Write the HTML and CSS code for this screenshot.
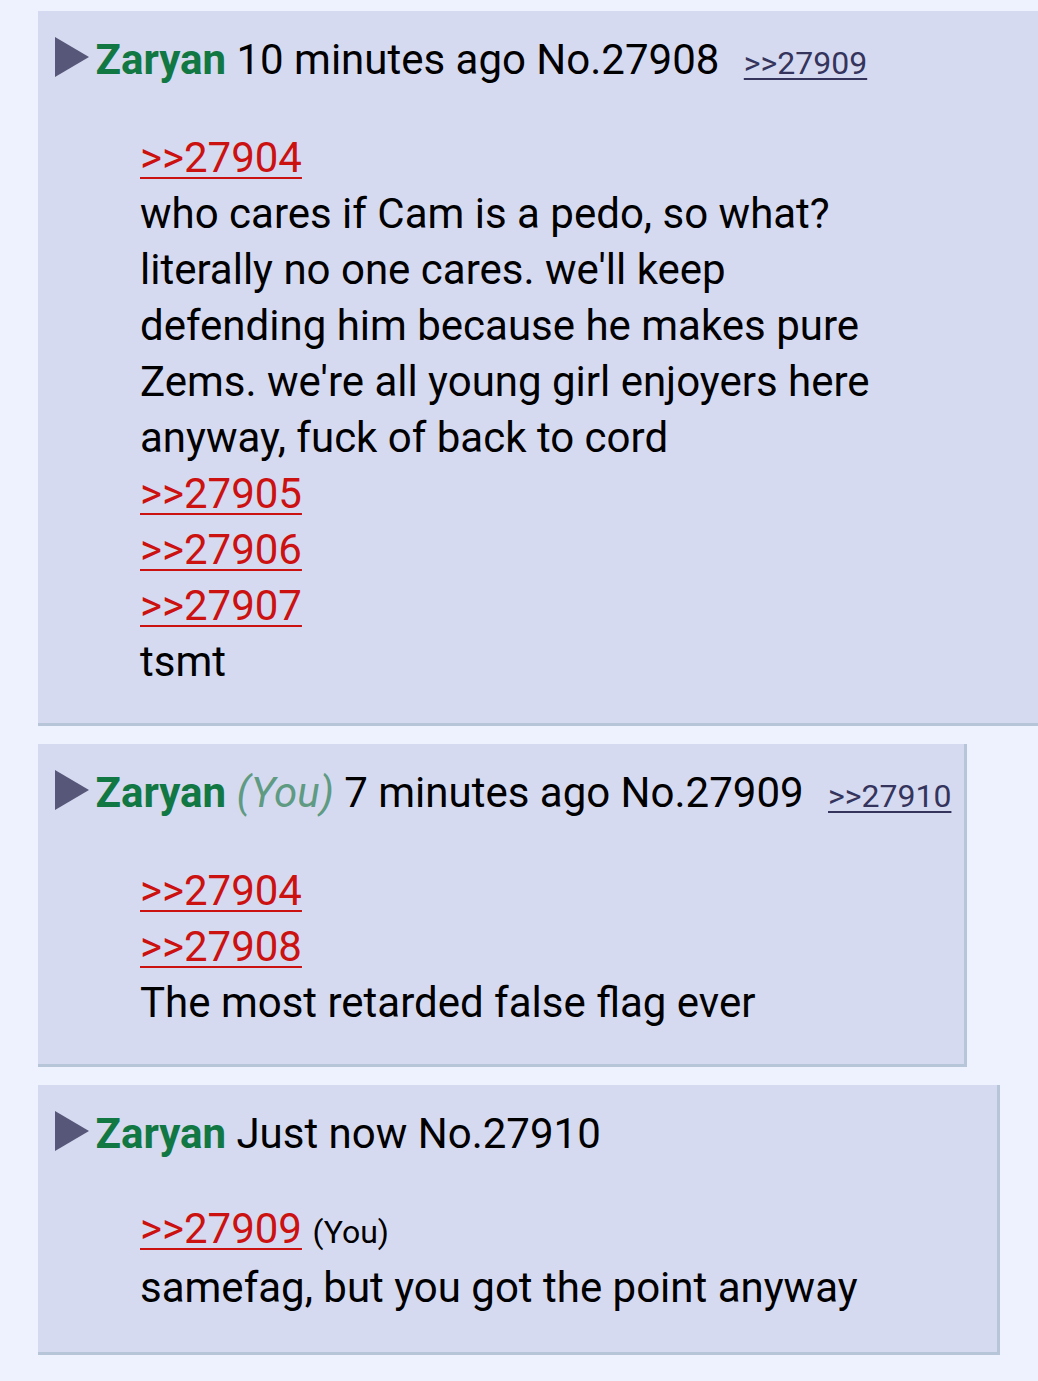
FILE: index.html
```html
<!DOCTYPE html>
<html lang="en">
<head>
  <meta charset="UTF-8">
  <meta name="viewport" content="width=device-width, initial-scale=1.0">
  <title>Thread</title>
  <link rel="stylesheet" href="styles.css">
</head>
<body>

  <div class="hilo">
    <!-- Post 27908 -->
    <div class="post">
      <div class="cabecera">
        <span class="flecha"></span>
        <span class="nombre">Zaryan</span>
        <span class="fecha">10 minutes ago</span>
        <span class="numero">No.27908</span>
        <a class="respuesta" href="#p27909">&gt;&gt;27909</a>
      </div>
      <blockquote class="cuerpo">
        <a class="cita" href="#p27904">&gt;&gt;27904</a><br>
        who cares if Cam is a pedo, so what? literally no one cares. we'll keep defending him because he makes pure Zems. we're all young girl enjoyers here anyway, fuck of back to cord<br>
        <a class="cita" href="#p27905">&gt;&gt;27905</a><br>
        <a class="cita" href="#p27906">&gt;&gt;27906</a><br>
        <a class="cita" href="#p27907">&gt;&gt;27907</a><br>
        tsmt
      </blockquote>
    </div>

    <!-- Post 27909 -->
    <div class="post">
      <div class="cabecera">
        <span class="flecha"></span>
        <span class="nombre">Zaryan</span>
        <span class="tu">(You)</span>
        <span class="fecha">7 minutes ago</span>
        <span class="numero">No.27909</span>
        <a class="respuesta" href="#p27910">&gt;&gt;27910</a>
      </div>
      <blockquote class="cuerpo">
        <a class="cita" href="#p27904">&gt;&gt;27904</a><br>
        <a class="cita" href="#p27908">&gt;&gt;27908</a><br>
        The most retarded false flag ever
      </blockquote>
    </div>

    <!-- Post 27910 -->
    <div class="post">
      <div class="cabecera">
        <span class="flecha"></span>
        <span class="nombre">Zaryan</span>
        <span class="fecha">Just now</span>
        <span class="numero">No.27910</span>
      </div>
      <blockquote class="cuerpo">
        <a class="cita" href="#p27909">&gt;&gt;27909</a> <span class="tu-cita">(You)</span><br>
        samefag, but you got the point anyway
      </blockquote>
    </div>
  </div>

</body>
</html>
```

FILE: styles.css
```css
body {
  font-family: Roboto, 'Noto Sans', sans-serif;
  background-color: #eef2ff;
  color: #000;
  margin: 0;
  overflow-x: hidden;
}

.hilo {
  display: flex;
  flex-direction: column;
  align-items: flex-start;
  gap: 18px;
  padding: 11px 0 0 38px;
  margin-right: -6px;
}

.post {
  display: table;
  background-color: #d6daf0;
  border-right: 3px solid #b7c5d9;
  border-bottom: 3px solid #b7c5d9;
  padding: 21px 13px 33px 0;
  font-size: 42px;
  line-height: 56px;
}

.post:last-child {
  padding-bottom: 36px;
}

.cabecera {
  padding-left: 17px;
  white-space: nowrap;
}

.flecha {
  display: inline-block;
  width: 0;
  height: 0;
  border-top: 20px solid transparent;
  border-bottom: 20px solid transparent;
  border-left: 34px solid #575779;
  margin-right: -4px;
  vertical-align: -3px;
}

.nombre {
  color: #117743;
  font-weight: bold;
}

.tu {
  color: #5f9a82;
  font-style: italic;
}

.respuesta {
  color: #34345c;
  font-size: 32px;
  margin-left: 14px;
  text-decoration-thickness: 2px;
  text-underline-offset: 4px;
}

.cuerpo {
  margin: 39px 126px 0 102px;
}

.cita {
  color: #cc1111;
  text-decoration-thickness: 2px;
  text-underline-offset: 5px;
}

.tu-cita {
  font-size: 32px;
}
```
